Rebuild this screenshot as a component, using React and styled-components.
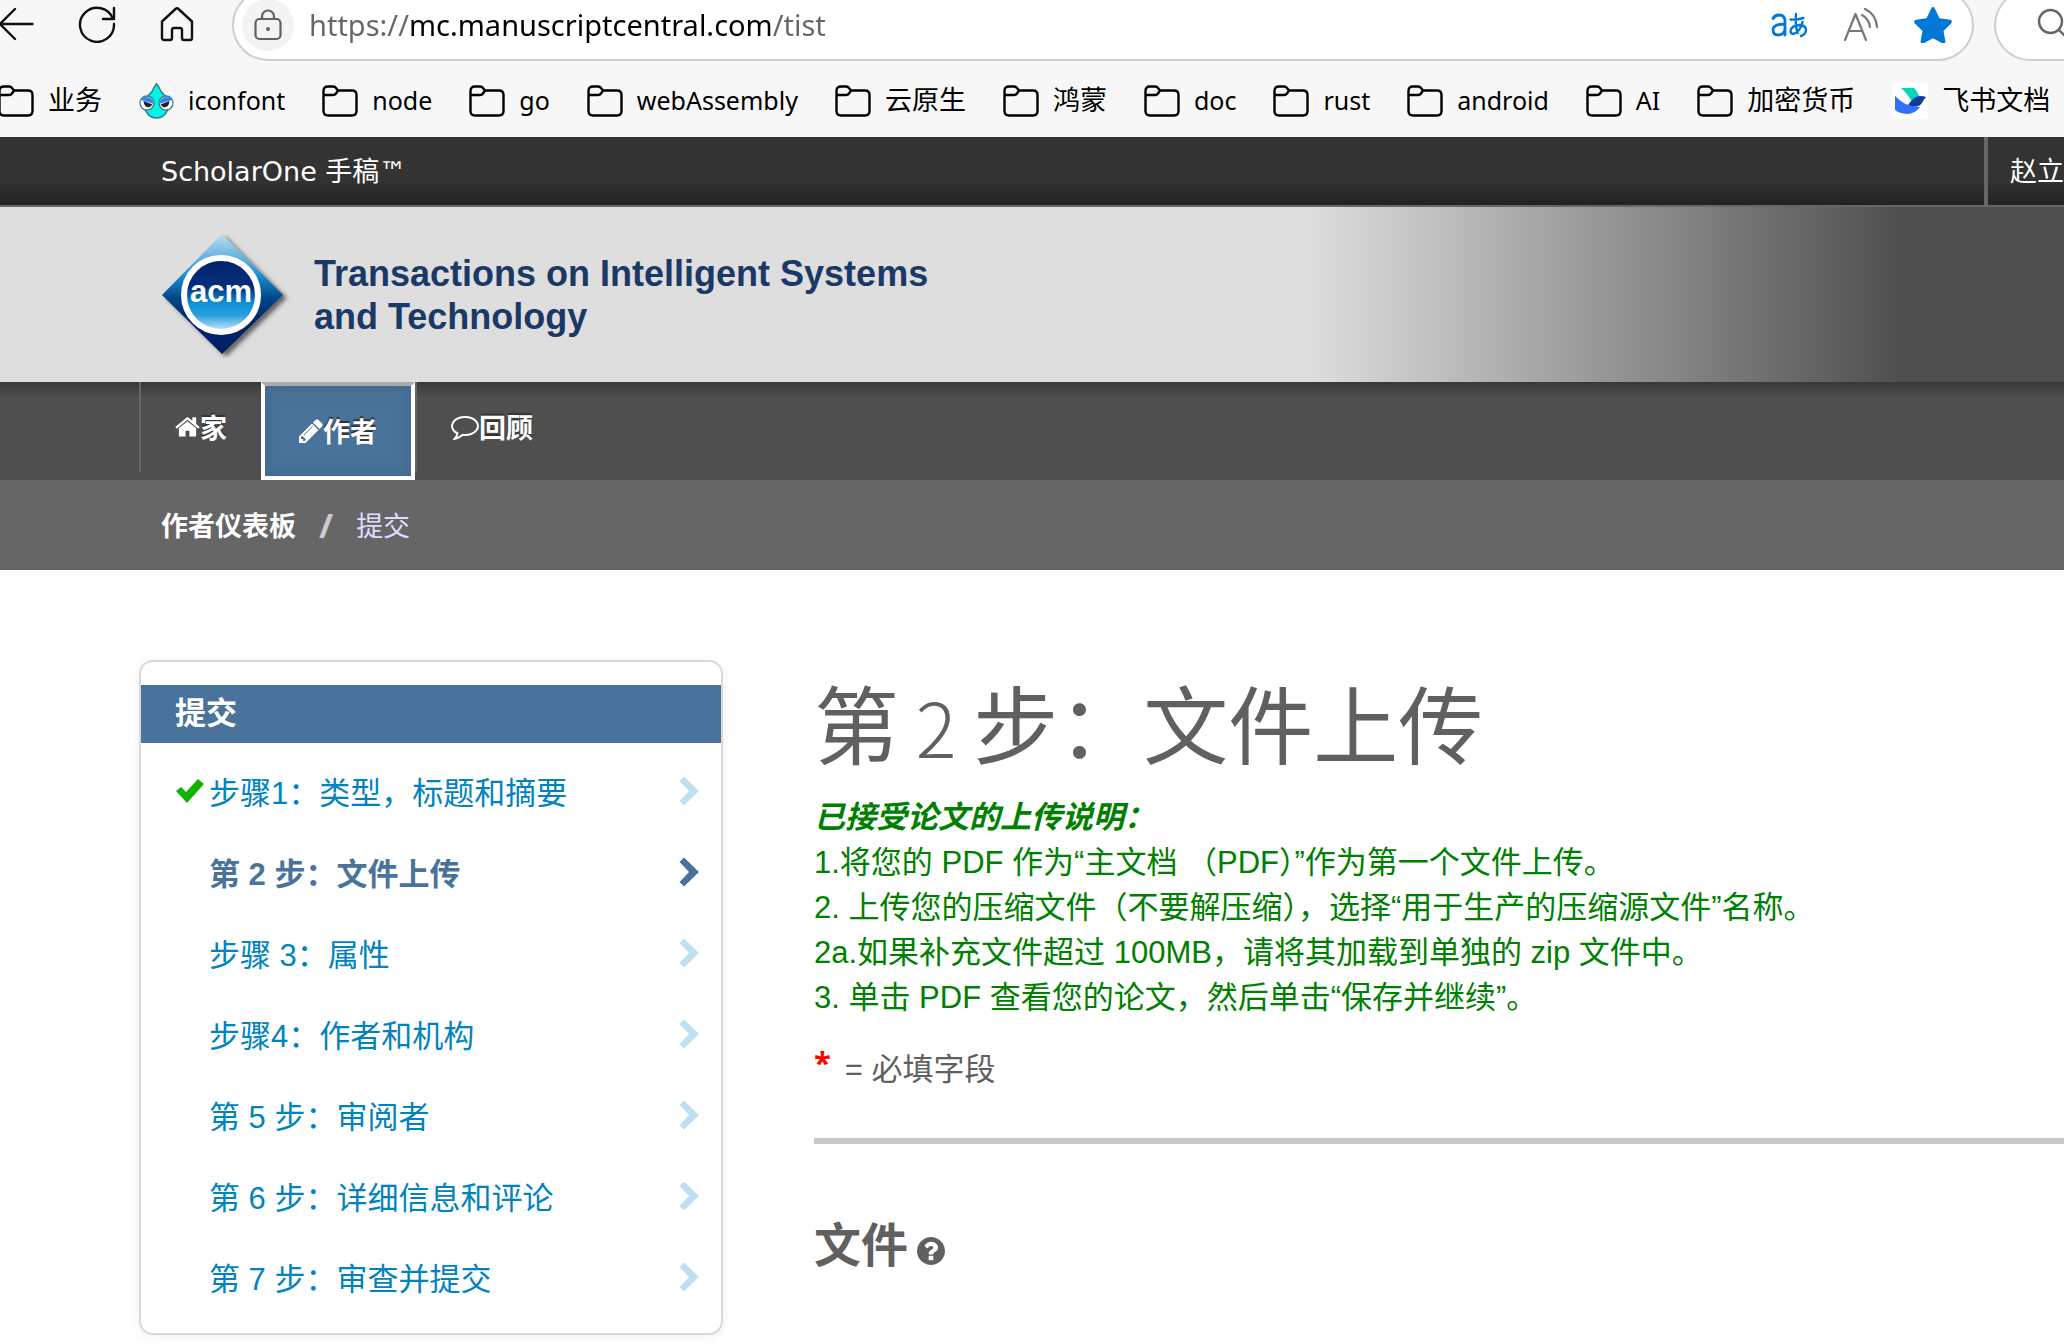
import React from "react";
import styled, { createGlobalStyle, css } from "styled-components";

const UI_FONT = `"Noto Sans", "Noto Sans CJK SC", sans-serif`;
const BAR_FONT = `"DejaVu Sans", "Noto Sans CJK SC", sans-serif`;
const BODY_FONT = `"Liberation Sans", "Noto Sans CJK SC", sans-serif`;
const CJK_FONT = `"Noto Sans CJK SC", sans-serif`;

const GlobalStyle = createGlobalStyle`
  *, *::before, *::after { box-sizing: border-box; }
  body {
    margin: 0;
    background: #fff;
    color: #606060;
    font-family: ${BODY_FONT};
    overflow-x: hidden;
  }
  button { border: 0; padding: 0; background: none; color: inherit; font: inherit; cursor: pointer; }
  a { color: inherit; text-decoration: none; }
  ul, ol { list-style: none; margin: 0; padding: 0; }
  h1, h2, p { margin: 0; }
  svg { display: block; flex: none; }
`;

/* ---------- browser chrome ---------- */

const Chrome = styled.header`
  background: #f7f7f7;
  font-family: ${UI_FONT};
  overflow: hidden;
`;

const Toolbar = styled.div`
  display: flex;
  align-items: flex-end;
  height: 61px;
  overflow: hidden;
`;

const NavButtons = styled.div`
  display: flex;
  flex: none;
  align-items: center;
  gap: 44px;
  height: 72px;
  width: 233px;
  margin-left: -2px;
  padding-bottom: 2px;
  color: #111;
`;

const IconButton = styled.button`
  display: flex;
  flex: none;
  align-items: center;
  justify-content: center;
  color: ${(p) => p.$color || "inherit"};
`;

const AddressBar = styled.div`
  display: flex;
  flex: 1;
  min-width: 0;
  align-items: center;
  height: 72px;
  padding: 0 20px 0 8px;
  margin-left: 1px;
  background: #fff;
  border: 2px solid #cfcfcf;
  border-radius: 36px;
`;

const SiteInfo = styled(IconButton)`
  width: 52px;
  height: 52px;
  border-radius: 26px;
  background: #f3f3f3;
  color: #616161;
`;

const UrlInput = styled.input`
  flex: 1;
  min-width: 0;
  height: 40px;
  margin: 0 0 0 15px;
  padding: 0;
  border: 0;
  outline: 0;
  font: 29px/40px ${UI_FONT};
  color: transparent;
  background: linear-gradient(90deg, #666 100px, #000 100px, #000 463px, #666 463px);
  background-clip: text;
  -webkit-background-clip: text;
`;

const AddressActions = styled.div`
  display: flex;
  align-items: center;
  gap: 35px;
`;

const SearchPill = styled.div`
  display: flex;
  flex: none;
  align-items: center;
  width: 70px;
  height: 72px;
  margin-left: 20px;
  padding: 0 0 2px 41px;
  background: #fff;
  border: 2px solid #cfcfcf;
  border-right: 0;
  border-radius: 36px 0 0 36px;
  overflow: hidden;
`;

const Bookmarks = styled.nav`
  display: flex;
  align-items: center;
  gap: 37px;
  height: 76px;
  padding: 4px 0 0;
  margin-left: -2px;
`;

const Bookmark = styled.a`
  display: flex;
  flex: none;
  align-items: center;
  gap: 14px;
  color: #000;
  white-space: nowrap;
  line-height: 34px;
  font-size: ${(p) => (p.$cjk ? 27 : 25)}px;
`;

const BookmarkLabel = styled.span`
  padding-bottom: 2px;
`;

/* ---------- site header ---------- */

const TopBar = styled.div`
  display: flex;
  align-items: stretch;
  justify-content: space-between;
  height: 70px;
  padding-left: 161px;
  background: linear-gradient(#333 0, #333 65%, #222 100%);
  border-bottom: 2px solid #666;
  color: #fff;
  font: 27px/66px ${BAR_FONT};
  white-space: nowrap;
  overflow: hidden;
`;

const Brand = styled.span`
  padding-top: 2px;
`;

const UserName = styled.a`
  padding-left: 22px;
  border-left: 4px solid #666;
  font-family: ${CJK_FONT};
`;

const Banner = styled.div`
  display: flex;
  align-items: center;
  gap: 24px;
  height: 175px;
  padding-left: 160px;
  background: linear-gradient(90deg, #dedede 63.400%, #4f4f4f 92%);
`;

const JournalTitle = styled.p`
  color: #1a3966;
  font: bold 36px/43px ${BODY_FONT};
`;

const TabBar = styled.nav`
  display: flex;
  height: 98px;
  padding-left: 139px;
  background: linear-gradient(#383838, #4f4f4f 16px);
  color: #fff;
  font: bold 27px/40px ${CJK_FONT};
  text-shadow: 0 -2px 1px #333;
`;

const Tab = styled.a`
  display: flex;
  align-items: center;
  padding: 0 34px;
  height: 90px;
  border-left: 2px solid #666;
  ${(p) =>
    p.$active &&
    css`
      height: 98px;
      background: #49739a;
      border: 4px solid #fff;
      border-top-color: #aaa;
      box-shadow: inset 0 0 16px #42668b;
    `}
`;

const Crumbs = styled.nav`
  display: flex;
  align-items: center;
  gap: 23px;
  height: 90px;
  padding-left: 161px;
  background: #666;
  color: #ccc;
  font: 27px/40px ${CJK_FONT};
`;

const CrumbLink = styled.a`
  color: #fff;
  font-weight: bold;
`;

const CrumbSlash = styled.span`
  font: bold 34px/40px "Noto Sans", sans-serif;
`;

const CrumbCurrent = styled.span`
  color: #dfdcff;
`;

/* ---------- page body ---------- */

const Page = styled.div`
  display: grid;
  grid-template-columns: 584px minmax(0, 1fr);
  column-gap: 91px;
  align-items: start;
  padding: 90px 0 10px 139px;
`;

const StepCard = styled.aside`
  padding: 23px 0 16px;
  border: 2px solid #d9d9d9;
  border-radius: 14px;
  box-shadow: 0 2px 12px rgba(0, 0, 0, 0.06);
`;

const StepHeading = styled.h2`
  padding: 0 34px 6px;
  background: #49739a;
  color: #fff;
  font: bold 31px/52px ${CJK_FONT};
`;

const StepList = styled.ol`
  padding-top: 7px;
`;

const StepLink = styled.a`
  display: flex;
  align-items: center;
  height: 81px;
  padding: 0 22px 0 34px;
  color: ${(p) => (p.$current ? "#49739a" : "#0083bf")};
  font-size: 31px;
  font-weight: ${(p) => (p.$current ? "bold" : "normal")};
  line-height: 40px;
`;

const StepMark = styled.span`
  flex: none;
  width: 34px;
`;

const StepLabel = styled.span`
  flex: 1;
  padding-top: 6px;
`;

const StepArrow = styled.span`
  color: ${(p) => (p.$current ? "#49739a" : "#bfe0f0")};
`;

const Main = styled.main`
  padding-top: 9px;
`;

const Title = styled.h1`
  font: 400 85px/104px ${CJK_FONT};
`;

const TitleNumber = styled.span`
  font-size: 76px;
  font-weight: 300;
`;

const Instructions = styled.div`
  padding-top: 18px;
  color: #008000;
  font-size: 31px;
  line-height: 45px;
`;

const InstructionsLead = styled.p`
  font-weight: bold;
  font-style: italic;
`;

const RequiredNote = styled.p`
  display: flex;
  gap: 14px;
  padding-top: 27px;
  font-size: 31px;
  line-height: 45px;
`;

const Star = styled.span`
  color: #f00;
  font: bold 31px/30px ${UI_FONT};
`;

const Divider = styled.hr`
  height: 6px;
  margin: 46px 0 68px;
  border: 0;
  background: #c8c8c8;
`;

const SectionTitle = styled.h2`
  display: flex;
  align-items: center;
  gap: 9px;
  font: bold 47px/60px ${CJK_FONT};
`;

const HelpButton = styled(IconButton)`
  padding-top: 18px;
`;

/* ---------- drawings ---------- */

const Line = ({ w, h, box, sw = 2, children }) => (
  <svg width={w} height={h} viewBox={box || `0 0 ${w} ${h}`} fill="none" stroke="currentColor"
    strokeWidth={sw} strokeLinecap="round" strokeLinejoin="round" aria-hidden="true">
    {children}
  </svg>
);

const BackIcon = () => (
  <Line w={36} h={36} sw={2.4}><path d="M34.500 18H2M17 3L2 18l15 15" /></Line>
);
const ReloadIcon = () => (
  <Line w={38} h={38} sw={2.4}><path d="M35 14A17 17 0 1 0 36 19M36 3v11H25" /></Line>
);
const HomeIcon = () => (
  <Line w={34} h={36} sw={2.4}>
    <path d="M2 15.500L15.500 3a2.200 2.200 0 0 1 3 0L32 15.500V32a2 2 0 0 1-2 2h-6a2 2 0 0 1-2-2v-8a2 2 0 0 0-2-2h-6a2 2 0 0 0-2 2v8a2 2 0 0 1-2 2H4a2 2 0 0 1-2-2z" />
  </Line>
);
const LockIcon = () => (
  <Line w={28} h={32} sw={2.2}>
    <rect x="1.500" y="10" width="25" height="20" rx="4" />
    <path d="M8 10V7.500a6 6 0 0 1 12 0V10" />
    <circle cx="14" cy="20" r="2" fill="currentColor" stroke="none" />
  </Line>
);
const TranslateIcon = () => (
  <Line w={38} h={28} sw={2.8}>
    <path d="M3 7.500Q5 4 9 4q6 0 6 6.500V24M15 13Q3 13 3 18.500 3 24 8 24q7 0 7-7" />
    <path d="M20.500 8.500q7 .5 13-1.500M26 3q-1 11 1.500 19M32.500 11q-2 9-8 11.500-4 1-4-2.500 1-5.500 9-6 6.500.5 6.500 5 0 4.500-5 6" strokeWidth="2.400" />
  </Line>
);
const ReadAloudIcon = () => (
  <Line w={36} h={36} sw={2.2}>
    <path d="M2 33L12.500 7 23 33M6 24h13M19 8q7 4 8 12M22 2q11 5 12 18" />
  </Line>
);
const StarIcon = () => (
  <svg width="38" height="36" viewBox="0 0 38 36" fill="currentColor" aria-hidden="true">
    <path d="M17.200 1.500q1.800-2.800 3.600 0l4.700 9.800 10.600 1.500q2.800.8 1.200 3.500l-7.800 7.600 1.900 10.500q.1 2.700-2.900 2L19 31.300 9.500 36.400q-3 .7-2.900-2l1.900-10.500L.7 16.300Q-.9 13.600 1.900 12.800l10.600-1.500z" />
  </svg>
);
const SearchIcon = () => (
  <Line w={32} h={32} sw={2.4}><circle cx="13.500" cy="13.500" r="11.500" /><path d="M22 22l9 9" /></Line>
);
const FolderIcon = () => (
  <Line w={36} h={32} sw={2.4}>
    <path d="M1.500 6q0-4.500 4.500-4.500h5q2 0 3 1.500l2 2.500H30q4.500 0 4.500 4.500v16q0 4.500-4.500 4.500H6q-4.500 0-4.500-4.500zM1.500 10H11q2 0 3-1.500l2-3" />
  </Line>
);
const IconfontIcon = () => (
  <svg width="35" height="36" viewBox="0 0 35 36" aria-hidden="true">
    <path d="M17.500.8Q20 4 22 8.500l6 6.500q3 5 1 11-3 9-11.500 9T6 26Q4 20 7 15l6-6.500Q15 4 17.500.8z" fill="#00f5e4" stroke="#2a7f86" strokeWidth="1.400" />
    <circle cx="8" cy="20" r="7" fill="#fff" stroke="#3b7f88" strokeWidth="1.300" />
    <circle cx="27" cy="20" r="7" fill="#fff" stroke="#3b7f88" strokeWidth="1.300" />
    <path d="M4 14.500Q13 12 15 21L2 17z" fill="#2e86f0" />
    <path d="M31 14.500Q22 12 20 21l13-4z" fill="#2e86f0" />
    <path d="M4.500 18l9 3.500Q11 25 8 24t-3.500-6zM30.500 18l-9 3.500Q24 25 27 24t3.500-6z" fill="#221f24" />
  </svg>
);
const FeishuIcon = () => (
  <svg width="36" height="36" viewBox="0 0 36 36" aria-hidden="true">
    <rect width="36" height="36" rx="4" fill="#fff" />
    <path d="M9 5h13q4 4 5 8-5 3-7 6Q16 11 9 5z" fill="#00d6b9" />
    <path d="M3 13q9 9 17 10l8 1q-5 7-13 7-8-.5-12-4z" fill="#3370ff" />
    <path d="M16 22q6-9 12-9 4 0 6 1-2 2-4 6-4 6-14 2z" fill="#133c9a" />
  </svg>
);
const CheckIcon = () => (
  <svg width="30" height="26" viewBox="0 0 30 26" aria-hidden="true">
    <path d="M1 13l5-4 5 5L23 1l6 5-17 19z" fill="#10b400" />
  </svg>
);
const ChevronIcon = () => (
  <svg width="20" height="30" viewBox="0 0 20 30" aria-hidden="true">
    <path d="M5 .5L20 15 5 29.500.500 25 10 15 .500 5z" fill="currentColor" />
  </svg>
);

const AWESOME = {
  home: "M1472 992v480q0 26-19 45t-45 19h-384v-384h-256v384h-384q-26 0-45-19t-19-45v-480q0-1 .5-3t.5-3l575-474 575 474q1 2 1 6zm223-69l-62 74q-8 9-21 11h-3q-13 0-21-7l-692-577-692 577q-12 8-24 7-13-2-21-11l-62-74q-8-10-7-23.500t11-21.500l719-599q32-26 76-26t76 26l244 204v-195q0-14 9-23t23-9h192q14 0 23 9t9 23v408l219 182q10 8 11 21.500t-7 23.500z",
  pencil: "M491 1536l91-91-235-235-91 91v107h128v128h107zm523-928q0-22-22-22-10 0-17 7l-542 542q-7 7-7 17 0 22 22 22 10 0 17-7l542-542q7-7 7-17zm-54-192l416 416-832 832h-416v-416zm683 96q0 53-37 90l-166 166-416-416 166-165q36-38 90-38 53 0 91 38l235 234q37 39 37 91z",
  comment: "M896 384q-204 0-381.500 69.500t-282 187.500-104.500 255q0 112 71.500 213.500t201.500 175.500l87 50-27 96q-24 91-70 172 152-63 275-171l43-38 57 6q69 8 130 8 204 0 381.500-69.500t282-187.500 104.500-255-104.500-255-282-187.500-381.500-69.500zm896 512q0 174-120 321.500t-326 233-450 85.500q-70 0-145-8-198 175-460 242-49 14-114 22h-5q-15 0-27-10.500t-16-27.500v-1q-3-4-.5-12t2-10 4.500-9.500l6-9 7-8.500 8-9q7-8 31-34.500t34.500-38 31-39.500 32.500-51 27-59 26-76q-157-89-247.500-220t-90.500-281q0-174 120-321.500t326-233 450-85.500 450 85.500 326 233 120 321.500z",
  help: "M1024 1376v-192q0-14-9-23t-23-9h-192q-14 0-23 9t-9 23v192q0 14 9 23t23 9h192q14 0 23-9t9-23zm256-672q0-88-55.500-163t-138.500-116-170-41q-243 0-371 213-15 24 8 42l132 100q7 6 19 6 16 0 25-12 53-68 86-92 34-24 86-24 48 0 85.500 26t37.500 59q0 38-20 61t-68 45q-63 28-115.500 86.500t-52.500 125.500v36q0 14 9 23t23 9h192q14 0 23-9t9-23q0-19 21.500-49.500t54.500-49.500q32-18 49-28.500t46-35 44.500-48 28-60.500 12.500-81zm384 192q0 209-103 385.500t-279.500 279.500-385.500 103-385.500-103-279.500-279.500-103-385.500 103-385.500 279.500-279.500 385.500-103 385.500 103 279.500 279.500 103 385.500z",
};

const Glyph = ({ name, w, box, h }) => (
  <svg width={w} height={h} viewBox={box} fill="currentColor" aria-hidden="true">
    <path d={AWESOME[name]} />
  </svg>
);

const AcmLogo = () => (
  <svg width="130" height="126" viewBox="0 0 130 126" role="img" aria-label="acm">
    <defs>
      <linearGradient id="acmDiamond" x1="0" y1="0" x2="0" y2="1">
        <stop offset="0" stopColor="#b9dcf0" />
        <stop offset="0.250" stopColor="#4fa8da" />
        <stop offset="0.380" stopColor="#0e84c8" />
        <stop offset="0.520" stopColor="#064a8c" />
        <stop offset="0.700" stopColor="#04296b" />
        <stop offset="1" stopColor="#021d63" />
      </linearGradient>
      <linearGradient id="acmDisc" x1="0" y1="0" x2="0" y2="1">
        <stop offset="0" stopColor="#03226a" />
        <stop offset="0.400" stopColor="#04307a" />
        <stop offset="0.600" stopColor="#0a8fd4" />
        <stop offset="0.780" stopColor="#2aa0df" />
        <stop offset="1" stopColor="#d8effa" />
      </linearGradient>
      <filter id="acmShadow" x="-10%" y="-10%" width="130%" height="130%">
        <feDropShadow dx="4" dy="3" stdDeviation="2" floodColor="#333" floodOpacity="0.700" />
      </filter>
    </defs>
    <path d="M62 2l61 61-61 59L2 63z" fill="url(#acmDiamond)" filter="url(#acmShadow)" />
    <circle cx="61" cy="63" r="37" fill="url(#acmDisc)" stroke="#fff" strokeWidth="6" />
    <text x="61" y="70" textAnchor="middle" fill="#fff" fontSize="31" fontWeight="bold" fontFamily="Liberation Sans, sans-serif">acm</text>
  </svg>
);

/* ---------- data ---------- */

const BOOKMARKS = [
  { label: "业务", cjk: true },
  { label: "iconfont", icon: IconfontIcon },
  { label: "node" },
  { label: "go" },
  { label: "webAssembly" },
  { label: "云原生", cjk: true },
  { label: "鸿蒙", cjk: true },
  { label: "doc" },
  { label: "rust" },
  { label: "android" },
  { label: "AI" },
  { label: "加密货币", cjk: true },
  { label: "飞书文档", cjk: true, icon: FeishuIcon },
];

const STEPS = [
  { label: "步骤1：类型，标题和摘要", done: true },
  { label: "第 2 步：文件上传", current: true },
  { label: "步骤 3：属性" },
  { label: "步骤4：作者和机构" },
  { label: "第 5 步：审阅者" },
  { label: "第 6 步：详细信息和评论" },
  { label: "第 7 步：审查并提交" },
];

const NOTES = [
  "1.将您的 PDF 作为“主文档 （PDF）”作为第一个文件上传。",
  "2. 上传您的压缩文件（不要解压缩），选择“用于生产的压缩源文件”名称。",
  "2a.如果补充文件超过 100MB，请将其加载到单独的 zip 文件中。",
  "3. 单击 PDF 查看您的论文，然后单击“保存并继续”。",
];

export default function App() {
  return (
    <>
      <GlobalStyle />
      <Chrome>
        <Toolbar>
          <NavButtons>
            <IconButton aria-label="Back"><BackIcon /></IconButton>
            <IconButton aria-label="Reload"><ReloadIcon /></IconButton>
            <IconButton aria-label="Home"><HomeIcon /></IconButton>
          </NavButtons>
          <AddressBar>
            <SiteInfo aria-label="Site information"><LockIcon /></SiteInfo>
            <UrlInput aria-label="Address" defaultValue="https://mc.manuscriptcentral.com/tist" spellCheck={false} />
            <AddressActions>
              <IconButton $color="#0078d7" aria-label="Translate"><TranslateIcon /></IconButton>
              <IconButton $color="#777" aria-label="Read aloud"><ReadAloudIcon /></IconButton>
              <IconButton $color="#0078d7" aria-label="Favourite"><StarIcon /></IconButton>
            </AddressActions>
          </AddressBar>
          <SearchPill>
            <IconButton $color="#666" aria-label="Search"><SearchIcon /></IconButton>
          </SearchPill>
        </Toolbar>
        <Bookmarks aria-label="Bookmarks">
          {BOOKMARKS.map(({ label, cjk, icon: Icon = FolderIcon }) => (
            <Bookmark key={label} href="#" $cjk={cjk}>
              <Icon />
              <BookmarkLabel>{label}</BookmarkLabel>
            </Bookmark>
          ))}
        </Bookmarks>
      </Chrome>

      <TopBar>
        <Brand>ScholarOne 手稿™</Brand>
        <UserName href="#">赵立</UserName>
      </TopBar>
      <Banner>
        <AcmLogo />
        <JournalTitle>Transactions on Intelligent Systems<br />and Technology</JournalTitle>
      </Banner>
      <TabBar>
        <Tab href="#"><Glyph name="home" w={25} h={22} box="64 200 1664 1400" />家</Tab>
        <Tab href="#" $active><Glyph name="pencil" w={24} h={24} box="128 128 1536 1536" />作者</Tab>
        <Tab href="#"><Glyph name="comment" w={28} h={28} box="0 64 1792 1792" />回顾</Tab>
      </TabBar>
      <Crumbs aria-label="Breadcrumb">
        <CrumbLink href="#">作者仪表板</CrumbLink>
        <CrumbSlash>/</CrumbSlash>
        <CrumbCurrent>提交</CrumbCurrent>
      </Crumbs>

      <Page>
        <StepCard>
          <StepHeading>提交</StepHeading>
          <StepList>
            {STEPS.map((s) => (
              <li key={s.label}>
                <StepLink href="#" $current={s.current}>
                  <StepMark>{s.done && <CheckIcon />}</StepMark>
                  <StepLabel>{s.label}</StepLabel>
                  <StepArrow $current={s.current}><ChevronIcon /></StepArrow>
                </StepLink>
              </li>
            ))}
          </StepList>
        </StepCard>

        <Main>
          <Title>第<TitleNumber> 2 </TitleNumber>步：文件上传</Title>
          <Instructions>
            <InstructionsLead>已接受论文的上传说明：</InstructionsLead>
            {NOTES.map((n) => <p key={n}>{n}</p>)}
          </Instructions>
          <RequiredNote><Star>*</Star><span>= 必填字段</span></RequiredNote>
          <Divider />
          <SectionTitle>
            文件
            <HelpButton aria-label="Help"><Glyph name="help" w={28} h={28} box="128 128 1536 1536" /></HelpButton>
          </SectionTitle>
        </Main>
      </Page>
    </>
  );
}
